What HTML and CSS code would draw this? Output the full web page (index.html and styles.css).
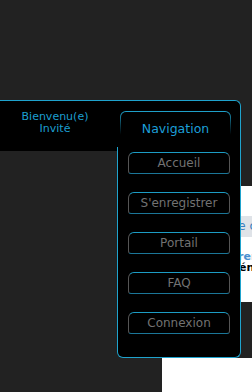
FILE: index.html
```html
<!DOCTYPE html>
<html>
    <head>
        <meta charset="utf-8">
        <title>Forum</title>
        <link rel="stylesheet" href="styles.css">
    </head>
    <body>
        <div class="page">
            <header class="topbar">
                <div class="welcome">Bienvenu(e)<br>Invité</div>
                <nav class="menu">
                    <div class="menu-title">Navigation</div>
                    <div class="menu-body">
                        <a class="menu-btn" href="#">Accueil</a>
                        <a class="menu-btn" href="#">S'enregistrer</a>
                        <a class="menu-btn" href="#">Portail</a>
                        <a class="menu-btn" href="#">FAQ</a>
                        <a class="menu-btn" href="#">Connexion</a>
                    </div>
                </nav>
            </header>
            <main class="content">
                <section class="block block-forum">
                    <div class="forum-band">Bienvenue chez nous</div>
                    <div class="forum-cat">Première catégorie</div>
                    <div class="forum-name">Général</div>
                </section>
                <section class="block block-bottom"></section>
            </main>
        </div>
    </body>
</html>
```

FILE: styles.css
```css
body {
    margin: 0;
    background-color: #222222;
    font-family: "DejaVu Sans", Verdana, sans-serif;
}

.page {
    padding-top: 100px;
}

/* barre du haut */
.topbar {
    position: relative;
    width: 240px;
    height: 50px;
    background-color: #000;
    border-top: 1px solid #1fa3cd;
    border-right: 1px solid #1fa3cd;
    border-top-right-radius: 6px;
}

.welcome {
    width: 110px;
    padding-top: 10px;
    font-size: 11px;
    line-height: 12px;
    text-align: center;
    color: #1c9fd0;
}

/* menu de navigation */
.menu {
    position: absolute;
    left: 117px;
    top: 10px;
    width: 124px;
    z-index: 2;
}

.menu-title {
    margin: 0 10px 0 3px;
    height: 23px;
    padding-top: 10px;
    border: 1px solid transparent;
    border-bottom: none;
    border-radius: 6px 6px 0 0;
    background: linear-gradient(#000, #000) padding-box,
        linear-gradient(#1fa3cd, #0b3d4d 40%, transparent 70%) border-box;
    font-size: 12.5px;
    line-height: 14px;
    text-align: center;
    color: #1c9fd8;
}

.menu-body {
    display: flex;
    flex-direction: column;
    gap: 18px;
    margin-top: 2px;
    padding: 5px 10px 23px 10px;
    background-color: #000;
    border: 1px solid #1fa3cd;
    border-top: none;
    border-radius: 0 0 6px 6px;
}

.menu-btn {
    display: block;
    height: 20px;
    border: 1px solid;
    border-color: #1c9cc4 #555 #1b7799 #555;
    border-radius: 6px 6px 3px 3px;
    font-size: 12px;
    line-height: 20px;
    text-align: center;
    text-decoration: none;
    color: #727272;
}

/* contenu derrière */
.content {
    margin-left: 162px;
}

.block {
    background-color: #fff;
    overflow: hidden;
}

.block-forum {
    margin-top: 35px;
    height: 116px;
    padding-top: 30px;
    box-sizing: border-box;
}

.forum-band {
    height: 21px;
    padding-left: 20px;
    background-color: #dfe3e8;
    font-size: 12px;
    line-height: 21px;
    white-space: nowrap;
    color: #3b7fbf;
}

.forum-cat,
.forum-name {
    padding-left: 68px;
    font-size: 11px;
    font-weight: bold;
    line-height: 11px;
    white-space: nowrap;
}

.forum-cat {
    margin-top: 14px;
    color: #4a8fd0;
}

.forum-name {
    color: #000;
}

.block-bottom {
    margin-top: 56px;
    height: 35px;
}
```
